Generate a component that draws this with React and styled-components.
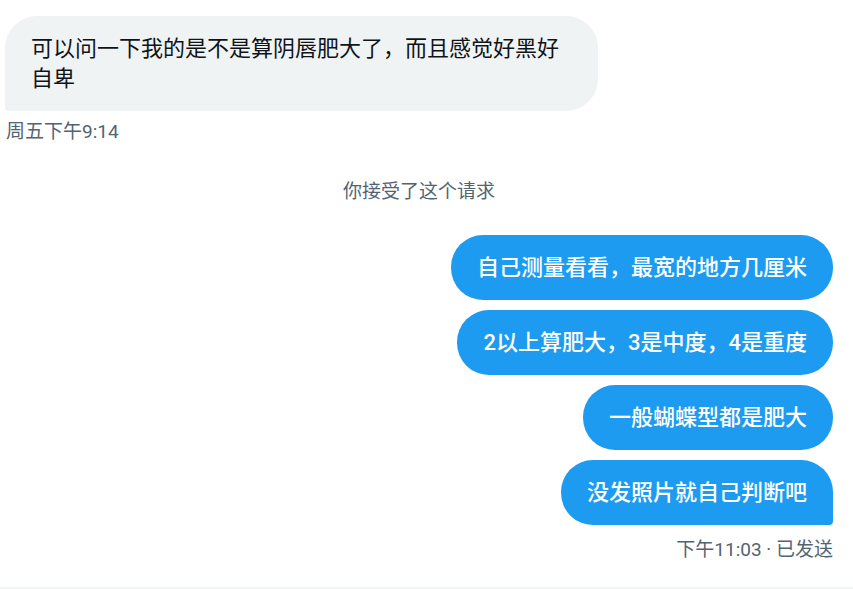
import { styled, createGlobalStyle } from "styled-components";

const GlobalStyle = createGlobalStyle`
    html, body {
        margin: 0;
        padding: 0;
        background: #ffffff;
    }
    body {
        font-family: Roboto, "Noto Sans CJK SC", sans-serif;
    }
`

const Conversation = styled.div`
    width: 853px;
    height: 589px;
    box-sizing: border-box;
    display: flex;
    flex-direction: column;
    padding: 16px 20px 0 5px;
    border-bottom: 2px solid #eff3f4;
    overflow: hidden;
`

const Group = styled.div`
    display: flex;
    flex-direction: column;
    align-items: ${(p) => (p.$mine ? "flex-end" : "flex-start")};
    gap: 10px;
`

const Bubble = styled.div`
    max-width: 593px;
    box-sizing: border-box;
    padding: 17.5px 26px;
    font-size: 22px;
    line-height: 30px;
    border-radius: 32px;
    font-weight: ${(p) => (p.$mine ? 500 : 400)};
    background-color: ${(p) => (p.$mine ? "#1d9bf0" : "#eff3f4")};
    color: ${(p) => (p.$mine ? "#ffffff" : "#0f1419")};
    ${(p) => p.$last && (p.$mine ? "border-bottom-right-radius: 4px;" : "border-bottom-left-radius: 4px;")}
`

const Meta = styled.div`
    margin-top: ${(p) => p.$top || 9}px;
    font-size: 19px;
    line-height: 24px;
    color: #536471;
    align-self: ${(p) => (p.$mine ? "flex-end" : "flex-start")};
    padding-left: ${(p) => (p.$mine ? 0 : 1)}px;
`

const Notice = styled.div`
    margin: 36px 0 31px;
    text-align: center;
    font-size: 19px;
    line-height: 24px;
    color: #536471;
`

const received = ["可以问一下我的是不是算阴唇肥大了，而且感觉好黑好自卑"]

const sent = [
    "自己测量看看，最宽的地方几厘米",
    "2以上算肥大，3是中度，4是重度",
    "一般蝴蝶型都是肥大",
    "没发照片就自己判断吧",
]

export default function App() {
    return (
        <>
            <GlobalStyle />
            <Conversation>
                <Group>
                    {received.map((text, i) => (
                        <Bubble key={i} $last={i === received.length - 1}>{text}</Bubble>
                    ))}
                </Group>
                <Meta>周五下午9:14</Meta>
                <Notice>你接受了这个请求</Notice>
                <Group $mine>
                    {sent.map((text, i) => (
                        <Bubble key={i} $mine $last={i === sent.length - 1}>{text}</Bubble>
                    ))}
                </Group>
                <Meta $mine $top={13}>下午11:03 · 已发送</Meta>
            </Conversation>
        </>
    )
}
